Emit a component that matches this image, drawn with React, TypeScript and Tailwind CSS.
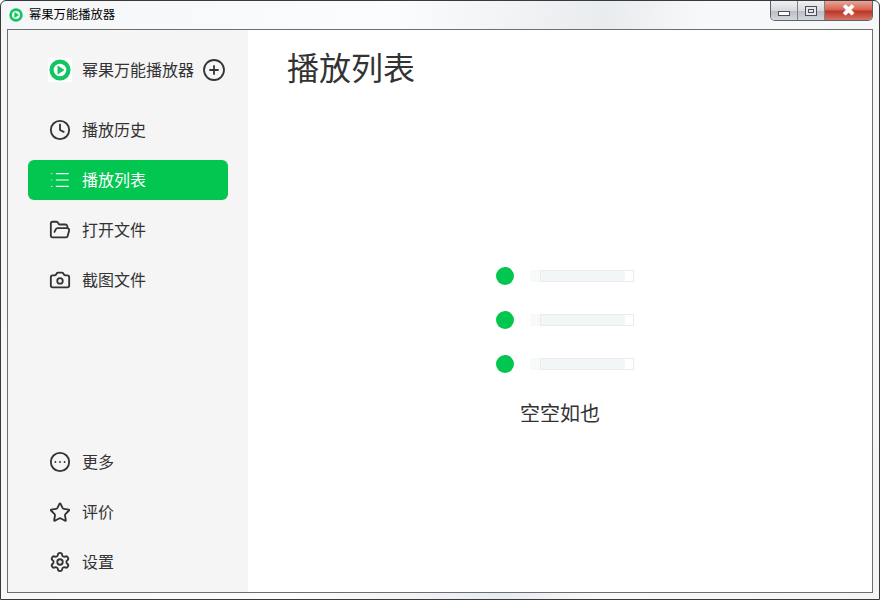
import { Camera, CircleEllipsis, CirclePlus, Clock, FolderOpen, List, Settings, Star } from "lucide-react";
import type { ReactNode } from "react";

const font = { fontFamily: '"Noto Sans CJK SC", "Microsoft YaHei", sans-serif' };

function Logo({ size }: { size: number }) {
  return (
    <svg width={size} height={size} viewBox="0 0 24 24" className="shrink-0">
      <circle cx="12" cy="12" r="9.2" fill="none" stroke="#0fc661" strokeWidth="4.6" />
      <path d="M9.8 7.8 L16.2 12 L9.8 16.2 Z" fill="#0fc661" stroke="#0fc661" strokeWidth="1" strokeLinejoin="round" />
    </svg>
  );
}

function Item({ icon, label, active }: { icon: ReactNode; label: string; active?: boolean }) {
  return (
    <div className={`mx-5 flex h-10 items-center gap-[11px] rounded-md pl-[21px] text-base ${active ? "bg-[#02c650] text-white" : "text-[#333333]"}`}>
      <span className="flex w-[22px] justify-center">{icon}</span>
      <span className="pb-[2px]">{label}</span>
    </div>
  );
}

function Placeholder() {
  return (
    <div className="flex items-center gap-4">
      <div className="h-[18px] w-[18px] rounded-full bg-[#02c650]" />
      <div className="flex h-3 w-[104px] bg-[#f9fbfb]">
        <div className="w-[10px] bg-[#f8fafa]" />
        <div className="flex flex-1 border border-[#e9ecec] bg-white">
          <div className="w-[84px] bg-[#f3f6f6]" />
        </div>
      </div>
    </div>
  );
}

export default function App() {
  const stroke = 2;
  return (
    <div style={font} className="relative flex h-[600px] w-[880px] flex-col overflow-hidden rounded-t-md border border-[#3a3a3a] bg-[linear-gradient(100deg,#f4f6f8_0%,#fbfcfd_40%,#e9ecef_62%,#f8f9fa_72%,#f3f5f7_100%)]">
      <div className="flex h-[28px] shrink-0 items-start">
        <div className="mt-[5px] flex items-center gap-[6px] pl-[8px] text-[12.3px] leading-4 text-black">
          <span className="mt-[2px] flex"><Logo size={14} /></span>
          <span>幂果万能播放器</span>
        </div>
        <div className="ml-auto mr-[6px] flex h-5 w-[103px] overflow-hidden rounded-b-[5px] border border-t-0 border-[#5d6169]">
          <div className="flex w-[27px] items-end justify-center border-r border-[#7d828a] bg-[linear-gradient(#eef0f3,#d6d9de_50%,#b9bdc4_52%,#d4d7dc)] pb-[4px]">
            <div className="h-[5px] w-[12px] border border-[#4c5058] bg-white" />
          </div>
          <div className="flex w-[27px] items-center justify-center border-r border-[#7d828a] bg-[linear-gradient(#eef0f3,#d6d9de_50%,#b9bdc4_52%,#d4d7dc)]">
            <div className="flex h-[10px] w-[12px] items-center justify-center border border-[#4c5058] bg-[#e4e6ea]">
              <div className="h-[4px] w-[6px] border border-[#4c5058]" />
            </div>
          </div>
          <div className="relative flex flex-1 items-center justify-center bg-[linear-gradient(#e9a597,#d5604d_48%,#bd3222_52%,#d27567)] text-[17px] font-bold leading-none text-white">
            <span style={{ fontFamily: '"DejaVu Sans", sans-serif' }}>✖</span>
          </div>
        </div>
      </div>
      <div className="mx-[6px] mb-[6px] flex min-h-0 flex-1 border border-[#6e6e6e] bg-white">
        <aside className="flex w-[240px] shrink-0 flex-col bg-[#f5f5f5] pb-[10px] pt-5">
          <div className="flex h-10 items-center pl-[40px] text-[#333333]">
            <span className="flex h-[24px] w-[24px] items-center justify-center bg-white"><Logo size={22} /></span>
            <span className="ml-[10px] pb-[2px] text-base">幂果万能播放器</span>
            <CirclePlus size={24} strokeWidth={1.8} className="ml-[8px]" color="#333333" />
          </div>
          <div className="mt-[20px] flex flex-col gap-[10px]">
            <Item icon={<Clock size={24} strokeWidth={stroke} />} label="播放历史" />
            <Item active icon={<List size={24} strokeWidth={1.3} />} label="播放列表" />
            <Item icon={<FolderOpen size={24} strokeWidth={stroke} />} label="打开文件" />
            <Item icon={<Camera size={24} strokeWidth={stroke} />} label="截图文件" />
          </div>
          <div className="mt-auto flex flex-col gap-[10px]">
            <Item icon={<CircleEllipsis size={24} strokeWidth={stroke} />} label="更多" />
            <Item icon={<Star size={23} strokeWidth={stroke} />} label="评价" />
            <Item icon={<Settings size={24} strokeWidth={stroke} />} label="设置" />
          </div>
        </aside>
        <main className="flex min-w-0 flex-1 flex-col">
          <h1 className="ml-[39px] mt-[9px] text-[32px] leading-[54px] text-[#333333]">播放列表</h1>
          <div className="mt-[174px] flex flex-col items-center">
            <div className="ml-[10px] flex flex-col gap-[26px]">
              <Placeholder />
              <Placeholder />
              <Placeholder />
            </div>
            <p className="mt-[26px] text-xl leading-7 text-[#333333]">空空如也</p>
          </div>
        </main>
      </div>
    </div>
  );
}
